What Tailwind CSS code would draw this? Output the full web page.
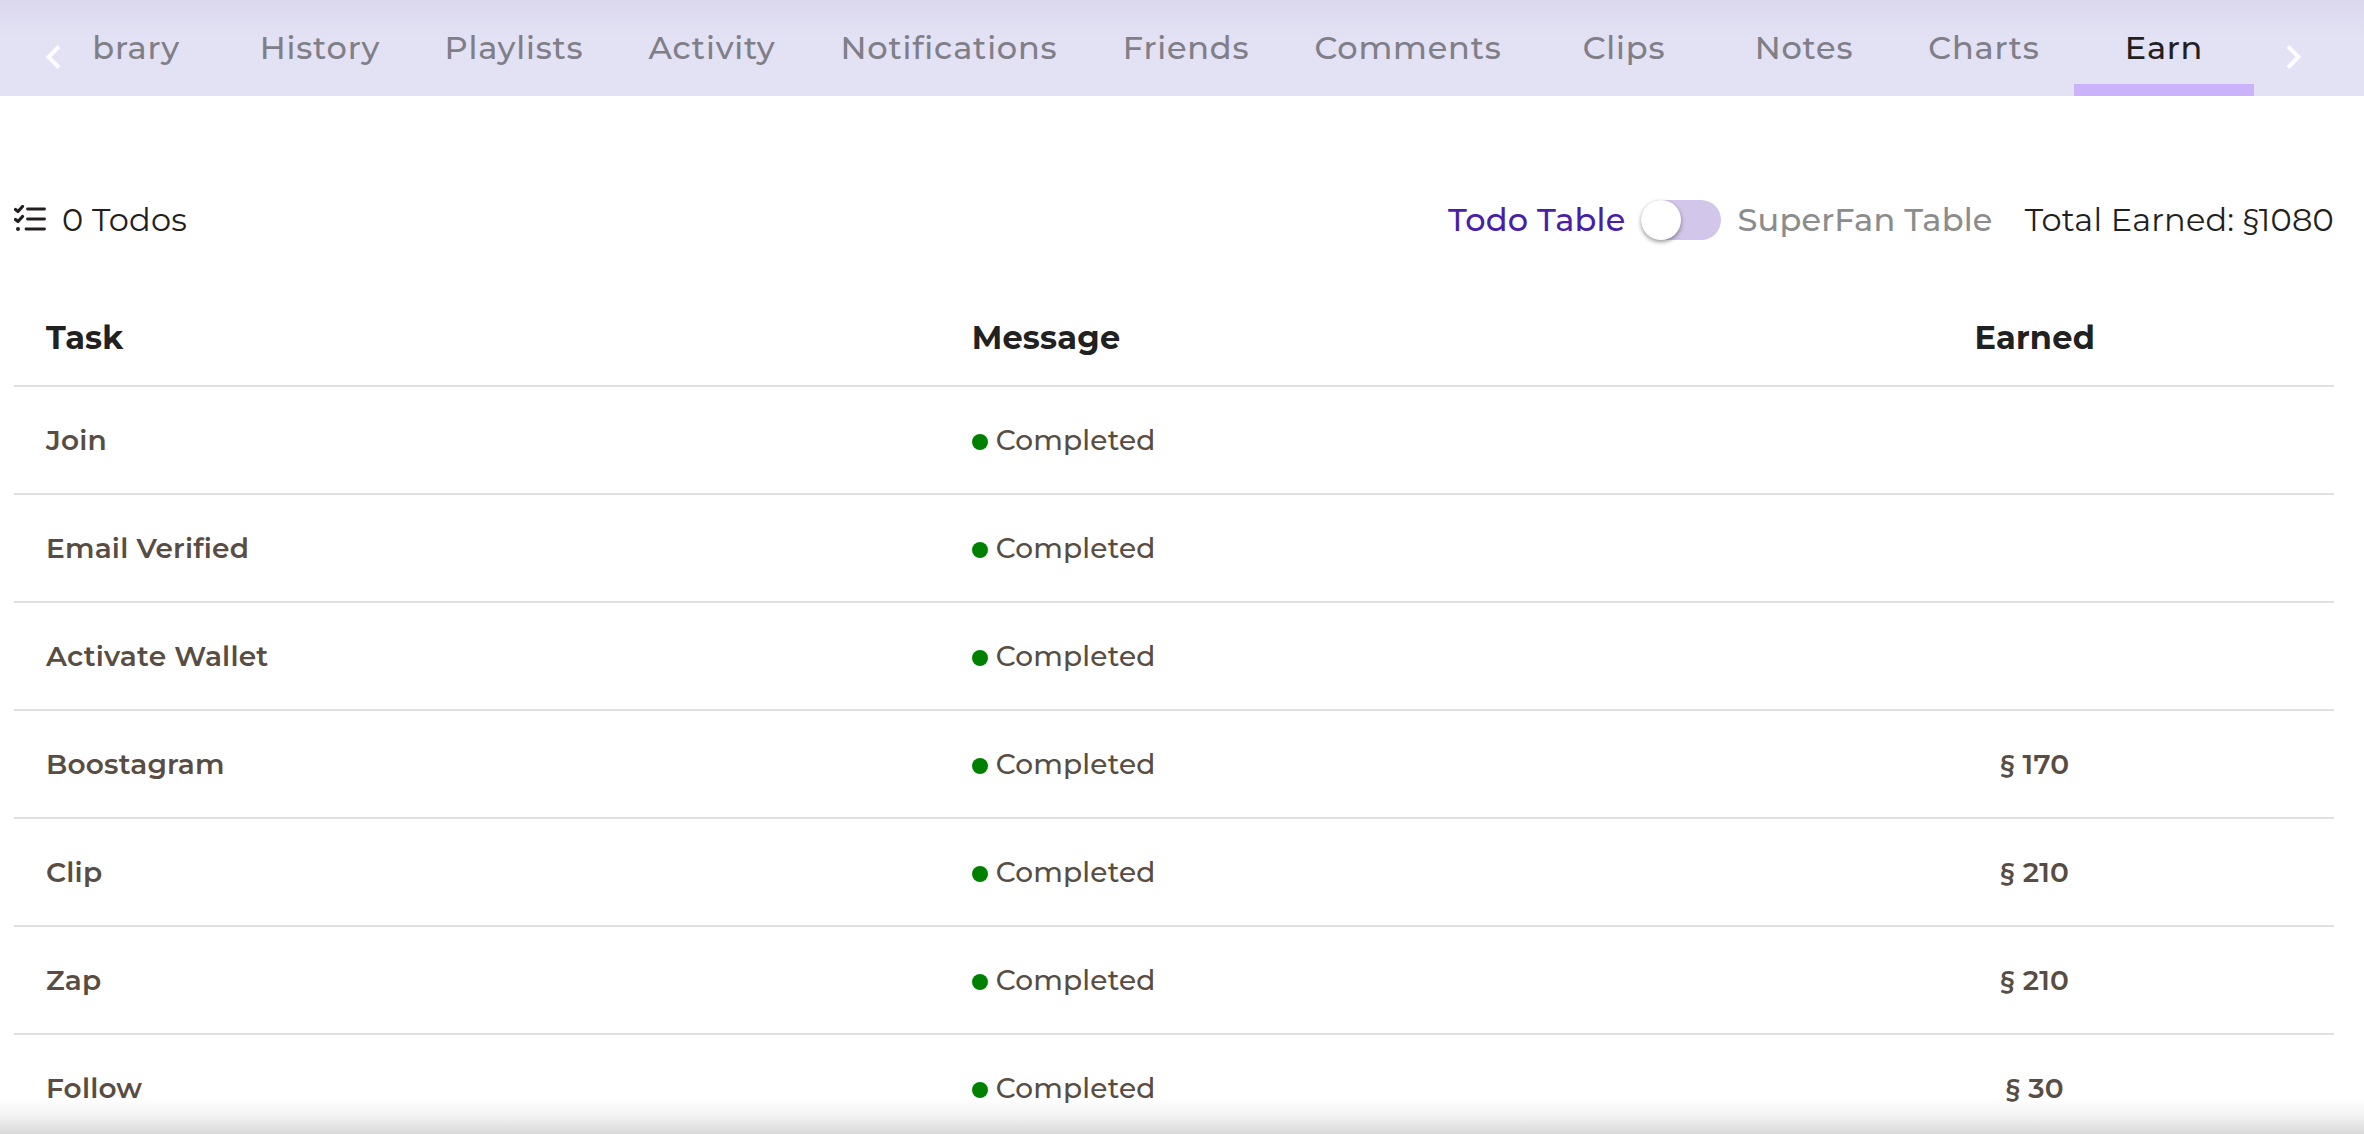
<!DOCTYPE html>
<html lang="en">
<head>
  <meta charset="UTF-8">
  <meta name="viewport" content="width=device-width, initial-scale=1.0">
  <title>Earn</title>
  <script src="https://cdn.jsdelivr.net/npm/@tailwindcss/browser@4"></script>
</head>
<body class="bg-white font-['Montserrat','Inter',sans-serif] tracking-[0.013em]">
  <div class="relative h-screen overflow-hidden">

    <!-- Tabs -->
    <header class="flex h-24 bg-[#e3e1f4] bg-linear-to-b from-[#dbd8ee] to-[#e3e1f4] to-40% text-[32px] font-medium tracking-wide text-[#807f87]">
      <button aria-label="Previous tabs" class="flex w-[92px] shrink-0 justify-end pt-[45px] pr-[31px] text-white/90">
        <svg class="h-6 w-4" viewBox="0 0 16 24" fill="none" stroke="currentColor" stroke-width="4"><path d="M14 1.5 3.5 12 14 22.5"/></svg>
      </button>
      <nav class="flex min-w-0 flex-1 justify-end overflow-hidden">
        <button class="shrink-0 pr-12 pl-8">Library</button>
        <button class="min-w-[184px] shrink-0">History</button>
        <button class="min-w-[204px] shrink-0">Playlists</button>
        <button class="min-w-[192px] shrink-0">Activity</button>
        <button class="min-w-[282px] shrink-0">Notifications</button>
        <button class="min-w-[192px] shrink-0">Friends</button>
        <button class="min-w-[252px] shrink-0">Comments</button>
        <button class="min-w-[180px] shrink-0">Clips</button>
        <button class="min-w-[180px] shrink-0">Notes</button>
        <button class="min-w-[180px] shrink-0">Charts</button>
        <button class="min-w-[180px] shrink-0 border-b-12 border-[#cbb3fc] pt-3 text-[#231f20]">Earn</button>
      </nav>
      <button aria-label="Next tabs" class="flex w-[110px] shrink-0 pt-[45px] pl-8 text-white/90">
        <svg class="h-6 w-4" viewBox="0 0 16 24" fill="none" stroke="currentColor" stroke-width="4"><path d="M2 1.5 12.5 12 2 22.5"/></svg>
      </button>
    </header>

    <main class="pt-[104px] pr-[30px] pl-[14px]">
      <!-- Summary row -->
      <div class="flex h-10 items-center text-[32px] text-[#231f20]">
        <svg class="mr-4 mb-1 h-[26px] w-8" viewBox="0 0 32 26" fill="none" stroke="currentColor" stroke-width="2.8" stroke-linecap="round" stroke-linejoin="round">
          <path d="M13.5 4H30.5M13.5 14H30.5M12 24H30.5"/>
          <path stroke-width="3.2" d="M1.5 4.5 4 6.5 8.5 1.5M1.5 14.5 4 16.5 8.5 11.5"/>
          <circle cx="4" cy="24" r="2" fill="currentColor" stroke="none"/>
        </svg>
        <span>0 Todos</span>
        <label for="tableSwitch" class="ml-auto font-medium text-[#4a1fa8]">Todo Table</label>
        <input id="tableSwitch" type="checkbox" role="switch" class="mx-4 h-10 w-20 appearance-none rounded-full bg-[#d2c6ea] before:block before:size-10 before:rounded-full before:bg-white before:shadow-[0_2px_4px_rgba(0,0,0,0.4)] checked:before:translate-x-10">
        <label for="tableSwitch" class="font-medium text-[#8c8c8c]">SuperFan Table</label>
        <span class="ml-8">Total Earned: §1080</span>
      </div>

      <table class="mt-[38px] w-full table-fixed text-left text-[28px] text-[#594d43]">
        <colgroup>
          <col class="w-[39.9%]">
          <col class="w-[34.3%]">
          <col class="w-[25.8%]">
        </colgroup>
        <thead class="text-[32px] text-[#212121]">
          <tr class="h-[108px] border-b-2 border-[#e0e0e0]">
            <th class="px-8 pt-3">Task</th>
            <th class="px-8 pt-3">Message</th>
            <th class="px-8 pt-3 text-center">Earned</th>
          </tr>
        </thead>
        <tbody id="todoRows"></tbody>
      </table>
    </main>

    <div class="pointer-events-none absolute inset-x-0 bottom-0 h-9 bg-linear-to-b from-transparent via-black/5 to-black/15"></div>
  </div>

  <script>
    const todos = [
      { task: 'Join', earned: '' },
      { task: 'Email Verified', earned: '' },
      { task: 'Activate Wallet', earned: '' },
      { task: 'Boostagram', earned: '§ 170' },
      { task: 'Clip', earned: '§ 210' },
      { task: 'Zap', earned: '§ 210' },
      { task: 'Follow', earned: '§ 30' },
    ];

    document.getElementById('todoRows').innerHTML = todos.map((todo) => `
      <tr class="h-[108px] border-b-2 border-[#e0e0e0]">
        <td class="px-8 font-semibold">${todo.task}</td>
        <td class="px-8 font-medium">
          <div class="flex items-center gap-2"><span class="mt-1 size-4 rounded-full bg-[#008000]"></span>Completed</div>
        </td>
        <td class="px-8 text-center font-semibold">${todo.earned}</td>
      </tr>`).join('');
  </script>
</body>
</html>
